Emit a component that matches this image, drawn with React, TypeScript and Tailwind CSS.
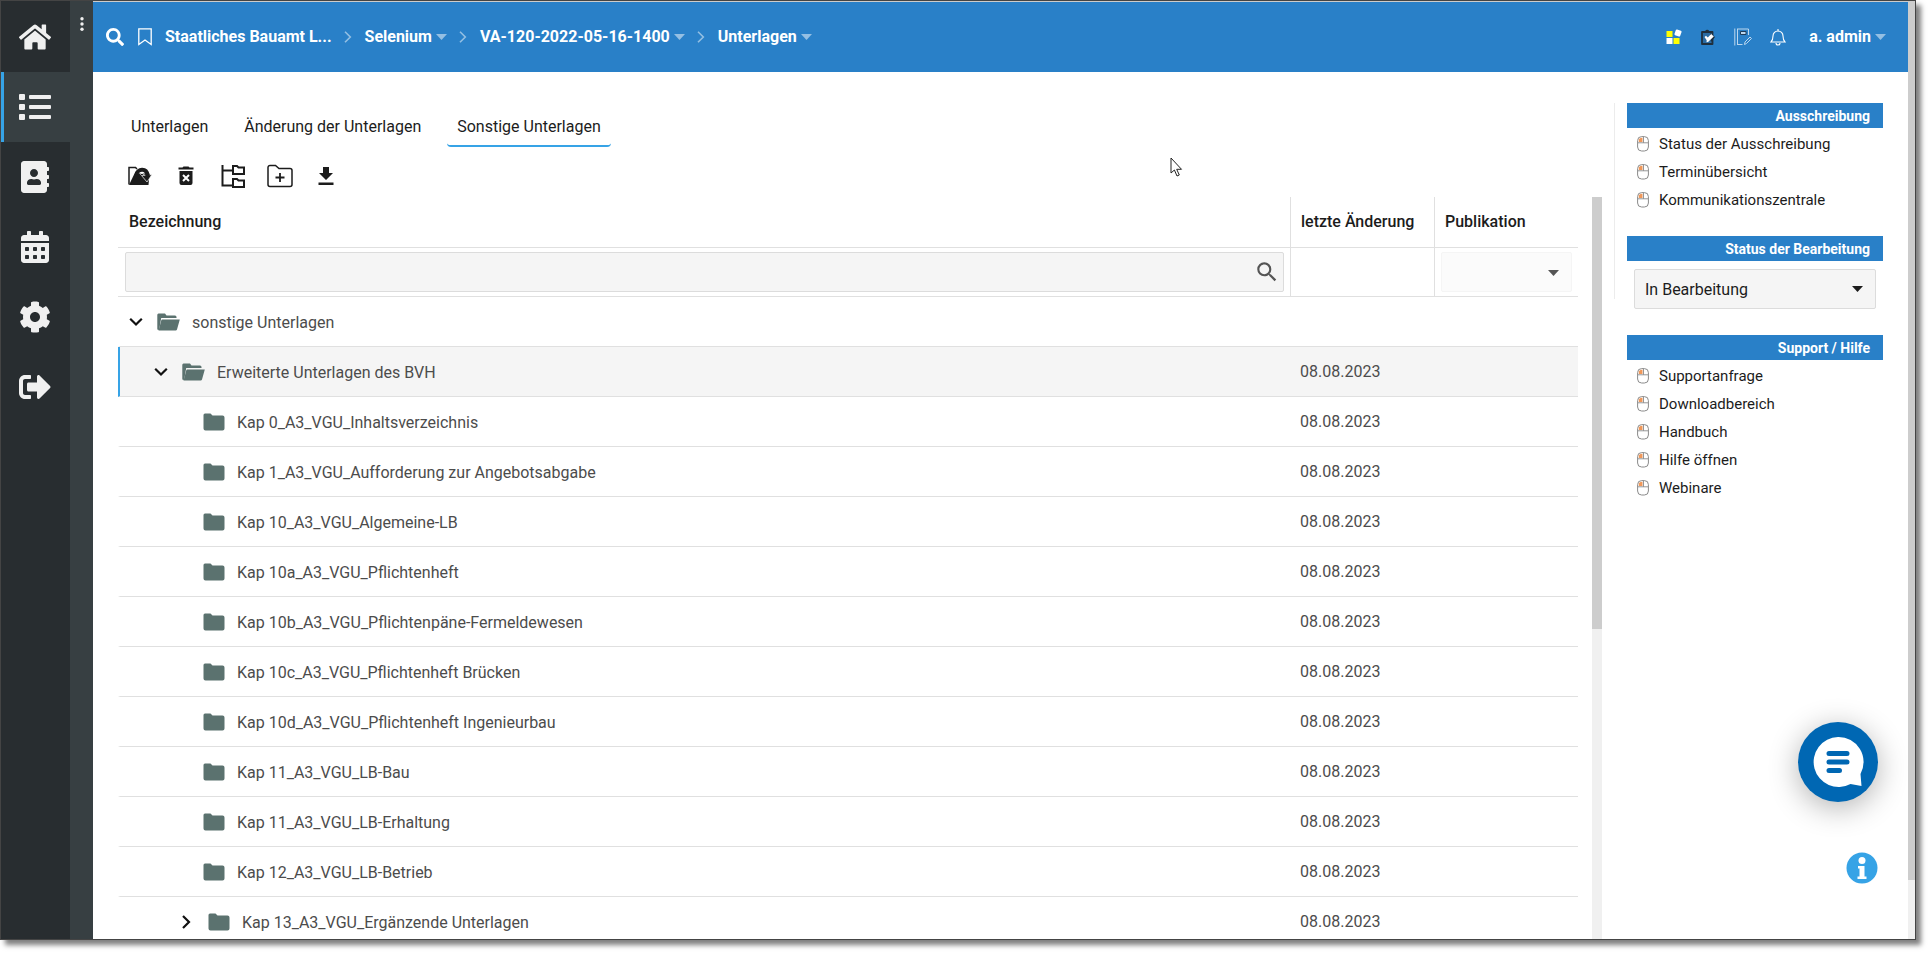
import { useState, type ReactNode } from 'react'
import { FaHome, FaList, FaAddressBook, FaCalendarAlt, FaCog, FaSignOutAlt, FaSearch } from 'react-icons/fa'
import { MdSearch } from 'react-icons/md'

interface TreeRow {
  name: string
  date?: string
  level: 'root' | 'branch' | 'leaf' | 'subBranch'
}

const DATE = '08.08.2023'

const ROWS: TreeRow[] = [
  { name: 'sonstige Unterlagen', level: 'root' },
  { name: 'Erweiterte Unterlagen des BVH', date: DATE, level: 'branch' },
  { name: 'Kap 0_A3_VGU_Inhaltsverzeichnis', date: DATE, level: 'leaf' },
  { name: 'Kap 1_A3_VGU_Aufforderung zur Angebotsabgabe', date: DATE, level: 'leaf' },
  { name: 'Kap 10_A3_VGU_Algemeine-LB', date: DATE, level: 'leaf' },
  { name: 'Kap 10a_A3_VGU_Pflichtenheft', date: DATE, level: 'leaf' },
  { name: 'Kap 10b_A3_VGU_Pflichtenpäne-Fermeldewesen', date: DATE, level: 'leaf' },
  { name: 'Kap 10c_A3_VGU_Pflichtenheft Brücken', date: DATE, level: 'leaf' },
  { name: 'Kap 10d_A3_VGU_Pflichtenheft Ingenieurbau', date: DATE, level: 'leaf' },
  { name: 'Kap 11_A3_VGU_LB-Bau', date: DATE, level: 'leaf' },
  { name: 'Kap 11_A3_VGU_LB-Erhaltung', date: DATE, level: 'leaf' },
  { name: 'Kap 12_A3_VGU_LB-Betrieb', date: DATE, level: 'leaf' },
  { name: 'Kap 13_A3_VGU_Ergänzende Unterlagen', date: DATE, level: 'subBranch' },
]

const INDENT = {
  root: 'pl-[6px]',
  branch: 'pl-[31px]',
  leaf: 'pl-[83px]',
  subBranch: 'pl-[56px]',
}

const NAV = [
  { label: 'Start', icon: <FaHome size={32} /> },
  { label: 'Liste', icon: <FaList size={32} /> },
  { label: 'Adressbuch', icon: <FaAddressBook size={32} /> },
  { label: 'Kalender', icon: <FaCalendarAlt size={32} /> },
  { label: 'Einstellungen', icon: <FaCog size={32} /> },
  { label: 'Abmelden', icon: <FaSignOutAlt size={32} /> },
]

const TABS = ['Unterlagen', 'Änderung der Unterlagen', 'Sonstige Unterlagen']

function Caret({ className }: { className?: string }) {
  return (
    <svg width="11" height="6" viewBox="0 0 11 6" className={className} aria-hidden="true">
      <path d="M0 0h11L5.500 6z" fill="currentColor" />
    </svg>
  )
}

function Chevron({ open }: { open: boolean }) {
  return (
    <svg width="20" height="20" viewBox="0 0 20 20" fill="none" stroke="#111" strokeWidth="2.2" aria-hidden="true">
      {open ? <path d="M4.2 6.7 10 12.5l5.800-5.800" /> : <path d="M7 4l6 6-6 6" />}
    </svg>
  )
}

function FolderClosed() {
  return (
    <svg width="22" height="18" viewBox="0 0 22 18" aria-hidden="true">
      <path d="M2 .5h5.500l2 2H19.500a2 2 0 0 1 2 2V15.500a2 2 0 0 1-2 2H2.500a2 2 0 0 1-2-2V2a1.500 1.500 0 0 1 1.500-1.500z" fill="#5b726f" />
    </svg>
  )
}

function FolderOpen() {
  return (
    <svg width="23" height="18" viewBox="0 0 23 18" aria-hidden="true">
      <path d="M1.500 .5H8l1.500 2H18a1.500 1.500 0 0 1 1.500 1.500v1H4.200L2.400 15.500 1.500 17.300A1.500 1.500 0 0 1 .3 16V2A1.500 1.500 0 0 1 1.500 .5z" fill="#5b726f" />
      <path d="M5.500 6.500H22.800L20 16.500a1.500 1.500 0 0 1-1.300 1H1.600L4.300 7.300a1 1 0 0 1 1.200-.8z" fill="#5b726f" />
    </svg>
  )
}

function MouseIcon() {
  return (
    <svg width="12" height="16" viewBox="0 0 12 16" fill="none" stroke="#8a8a8a" aria-hidden="true">
      <rect x=".6" y=".6" width="10.800" height="14.400" rx="4" />
      <path d="M1 6.800h10M6.500 1v5.800" strokeWidth=".9" />
      <path d="M1.800 3.500Q2.500 1.800 4.500 1.700H5.500V6H1.800z" fill="#f0985a" stroke="none" />
    </svg>
  )
}

function Crumb({ children, menu = true }: { children: ReactNode; menu?: boolean }) {
  return (
    <button type="button" className="flex items-center gap-1 font-bold">
      {children}
      {menu && <Caret className="text-[#94bfe3]" />}
    </button>
  )
}

function CrumbSeparator() {
  return (
    <svg width="8" height="12" viewBox="0 0 8 12" fill="none" stroke="#94bfe3" strokeWidth="1.600" className="ml-3 mr-[13px]" aria-hidden="true">
      <path d="M1 .8 6.300 6 1 11.200" />
    </svg>
  )
}

function TopBar() {
  return (
    <header className="flex h-[70px] shrink-0 items-center bg-[#2980c8] pl-[13px] pr-[22px] text-base text-white">
      <button type="button" aria-label="Suche" className="mr-[14px]">
        <FaSearch size={18} />
      </button>
      <button type="button" aria-label="Lesezeichen" className="mr-[13px]">
        <svg width="14" height="18" viewBox="0 0 14 18" fill="none" stroke="#fff" strokeWidth="1.300">
          <path d="M.8.8h12.400v15.700L7 12 .8 16.500z" />
        </svg>
      </button>
      <nav className="flex items-center" aria-label="Pfad">
        <Crumb menu={false}>Staatliches Bauamt L...</Crumb>
        <CrumbSeparator />
        <Crumb>Selenium</Crumb>
        <CrumbSeparator />
        <Crumb>VA-120-2022-05-16-1400</Crumb>
        <CrumbSeparator />
        <Crumb>Unterlagen</Crumb>
      </nav>
      <div className="ml-auto flex items-center gap-[18px]">
        <button type="button" aria-label="Anwendungen">
          <svg width="16" height="16" viewBox="0 0 16 16">
            <path d="M.5 2h6v6h-6zM7.500 9h6v6h-6z" fill="#ff0" />
            <path d="M.5 9h6v6h-6z" fill="#fff" />
            <rect x="9" y="1" width="6" height="6" rx="1" fill="#fff" transform="rotate(20 12 4)" />
          </svg>
        </button>
        <button type="button" aria-label="Aufgaben">
          <svg width="16" height="16" viewBox="0 0 16 16">
            <path d="M2 3h10.500v12H2z" fill="#2a6ba3" stroke="#1f2f3d" strokeWidth="1.800" strokeLinejoin="round" />
            <path d="M3.500 3.500V2H5.200a2.200 2.200 0 0 1 4 0H11v1.500z" fill="#1f2f3d" />
            <path d="M10 4l5 4-4 5z" fill="#1f2f3d" />
            <path d="M4.500 8 6 6.800l1.800 1.800L11.200 5l2.600 2.600L8 13l-1.500.3.200-2z" fill="#fff" />
          </svg>
        </button>
        <button type="button" aria-label="Notizen">
          <svg width="18" height="18" viewBox="0 0 18 18" fill="none" stroke="#bcd7ee">
            <path d="M.8.5v17M3.500 17V1M3 1h11.500v6M3 16.500h5.500" />
            <path d="M6.500 3.500h5.500v3h-5.500z" stroke="#1d3c5a" fill="#bcd7ee" />
            <path d="m10.500 16.500.5-2.500 5-5 1.500 1.500-5 5z" />
          </svg>
        </button>
        <button type="button" aria-label="Benachrichtigungen">
          <svg width="16" height="18" viewBox="0 0 16 18" fill="none" stroke="#fff" strokeWidth="1.100">
            <path d="M8 1v1.500M1 14h14c-1.500-1.500-2-2.500-2-6a5 5 0 0 0-10 0c0 3.500-.5 4.500-2 6zM6 15a2 2 0 0 0 4 0" />
          </svg>
        </button>
        <div className="ml-[5px]">
          <Crumb>a. admin</Crumb>
        </div>
      </div>
    </header>
  )
}

function Toolbar() {
  return (
    <div className="mt-4 flex h-[26px] items-center pl-[35px] text-[#1c1c1c]">
      <button type="button" aria-label="Ordner wechseln" className="mr-[26px]">
        <svg width="24" height="20" viewBox="0 0 24 20">
          <path d="M1 18.500V1.500h6.500L9 3" fill="none" stroke="currentColor" strokeWidth="1.500" />
          <path d="M1 19 6.500 7.500H21.500L20.500 19z" fill="currentColor" />
          <path d="M8.500 8.500C9.500 2.500 18.500 1.500 19.500 9" fill="none" stroke="currentColor" strokeWidth="4" />
          <path d="M12 8.500c2.500-2.500 4.500-.5 4.500 3" fill="none" stroke="#fff" strokeWidth="1" />
          <path d="M13.500 9.500 19 16l5-7.500-3 .5z" fill="currentColor" stroke="#fff" strokeWidth=".7" />
          <path d="M17.400 8h4.200v2.500h-4.200z" fill="currentColor" />
        </svg>
      </button>
      <button type="button" aria-label="Löschen" className="mr-[27px]">
        <svg width="16" height="20" viewBox="0 0 16 20">
          <path d="M.5 1.500h4l1-1h5l1 1h4v2H.5zM1.500 5h13v12a2 2 0 0 1-2 2h-9a2 2 0 0 1-2-2z" fill="currentColor" />
          <path d="m5 9 6 6M11 9l-6 6" stroke="#fff" strokeWidth="2" />
        </svg>
      </button>
      <button type="button" aria-label="Struktur" className="mr-[22px]">
        <svg width="24" height="24" viewBox="0 0 24 24" fill="none" stroke="currentColor" strokeWidth="2">
          <path d="M1.500 1v20.500H12M1.500 6.500H12" />
          <path d="M12 2h4l1.500 1.500H23V10H12zM12 15h4l1.500 1.500H23V23H12z" />
        </svg>
      </button>
      <button type="button" aria-label="Neuer Ordner" className="mr-[23px]">
        <svg width="26" height="24" viewBox="0 0 26 24" fill="none" stroke="currentColor" strokeWidth="1.500">
          <path d="M3 1.500h5.500L12 4.500h11a2 2 0 0 1 2 2V20.500a2 2 0 0 1-2 2H3a2 2 0 0 1-2-2v-17a2 2 0 0 1 2-2z" />
          <path d="M13 9v9M8.500 13.500h9" strokeWidth="1.800" />
        </svg>
      </button>
      <button type="button" aria-label="Herunterladen">
        <svg width="20" height="20" viewBox="0 0 20 20" fill="currentColor">
          <path d="M7 1h6v6h4l-7 7-7-7h4zM2.500 16.500h15V19h-15z" />
        </svg>
      </button>
    </div>
  )
}

function DocumentTable() {
  return (
    <table className="w-full table-fixed border-separate border-spacing-0 text-base text-[#4c4c4c]">
      <colgroup>
        <col />
        <col className="w-[144px]" />
        <col className="w-[143px]" />
      </colgroup>
      <thead className="text-left text-[#1c1c1c]">
        <tr className="h-[51px]">
          <th className="border-b border-r border-[#e0e0e0] pl-[11px] font-medium">Bezeichnung</th>
          <th className="border-b border-r border-[#e0e0e0] pl-[10px] font-medium">letzte Änderung</th>
          <th className="border-b border-[#e0e0e0] pl-[10px] font-medium">Publikation</th>
        </tr>
        <tr className="h-[49px]">
          <td className="border-b border-r border-[#e0e0e0] pl-[7px] pr-[6px]">
            <div className="relative">
              <input
                type="text"
                aria-label="Bezeichnung filtern"
                className="block h-10 w-full rounded-xs border border-[#dcdcdc] bg-[#f5f5f5] pl-3 pr-10 outline-none"
              />
              <MdSearch size={26} className="pointer-events-none absolute right-1 top-[7px] text-[#555]" />
            </div>
          </td>
          <td className="border-b border-r border-[#e0e0e0]" />
          <td className="border-b border-[#e0e0e0] px-[6px]">
            <div className="relative">
              <select
                aria-label="Publikation filtern"
                className="block h-10 w-full appearance-none rounded-xs border border-[#f5f5f5] bg-[#fbfbfb] pl-3"
              />
              <Caret className="pointer-events-none absolute right-[13px] top-[18px] text-[#555]" />
            </div>
          </td>
        </tr>
      </thead>
      <tbody>
        {ROWS.map(({ name, date, level }) => {
          const selected = level === 'branch'
          const open = level === 'root' || selected
          return (
            <tr key={name} className={selected ? 'h-[50px] bg-[#f5f5f5]' : 'h-[50px]'}>
              <td className={`border-b border-l-2 border-b-[#e0e0e0] ${selected ? 'border-l-[#36a3e6]' : 'border-l-transparent'}`}>
                <div className={`flex items-center ${INDENT[level]}`}>
                  {level !== 'leaf' && (
                    <button type="button" aria-label={open ? 'Zuklappen' : 'Aufklappen'} className={open ? 'mr-[11px]' : 'mr-3'}>
                      <Chevron open={open} />
                    </button>
                  )}
                  {open ? <FolderOpen /> : <FolderClosed />}
                  <span className="pl-3 pt-0.5">{name}</span>
                </div>
              </td>
              <td className="border-b border-[#e0e0e0] pl-[9px]">{date}</td>
              <td className="border-b border-[#e0e0e0]" />
            </tr>
          )
        })}
      </tbody>
    </table>
  )
}

function PanelTitle({ children }: { children: ReactNode }) {
  return (
    <h2 className="h-[25px] bg-[#2980c8] pr-[13px] pt-px text-right text-sm leading-6 font-bold text-white">{children}</h2>
  )
}

function LinkPanel({ title, links }: { title: string; links: string[] }) {
  return (
    <section>
      <PanelTitle>{title}</PanelTitle>
      <ul className="pt-[2px] text-[15px] leading-7 text-[#1c1c1c]">
        {links.map((link) => (
          <li key={link}>
            <a href="#" className="flex items-center gap-[10px] pl-[10px]">
              <MouseIcon />
              {link}
            </a>
          </li>
        ))}
      </ul>
    </section>
  )
}

export default function App() {
  const [tab, setTab] = useState(2)

  return (
    <div className="h-screen overflow-hidden bg-white pb-[15px] pr-[15px] font-[Roboto,sans-serif]">
      <div className="relative flex h-full border border-[#444] shadow-[5px_5px_5px_rgba(0,0,0,0.5)]">
        <aside className="flex shrink-0 bg-[#282d30] text-[#f0f0f0]">
          <nav className="w-[69px] pt-px" aria-label="Hauptmenü">
            {NAV.map(({ label, icon }, i) => (
              <button
                key={label}
                type="button"
                aria-label={label}
                className={`flex h-[70px] w-full items-center justify-center border-l-[3px] pr-[5px] ${i === 1 ? 'border-[#36a3e6] bg-[#373f42]' : 'border-transparent'}`}
              >
                {icon}
              </button>
            ))}
          </nav>
          <div className="w-[23px] bg-[#373f42] pt-4">
            <button type="button" aria-label="Menü" className="mx-auto block">
              <svg width="4" height="14" viewBox="0 0 4 14" fill="currentColor">
                <circle cx="2" cy="1.700" r="1.700" />
                <circle cx="2" cy="7" r="1.700" />
                <circle cx="2" cy="12.300" r="1.700" />
              </svg>
            </button>
          </div>
        </aside>

        <div className="flex min-w-0 flex-1 flex-col border-t border-[#ccc]">
          <TopBar />
          <div className="flex min-h-0 flex-1">
            <main className="flex min-w-0 flex-1 flex-col">
              <div className="mt-9 flex gap-4 pl-7" role="tablist">
                {TABS.map((label, i) => (
                  <button
                    key={label}
                    type="button"
                    role="tab"
                    aria-selected={i === tab}
                    onClick={() => setTab(i)}
                    className={`h-[39px] rounded-sm border-b-2 px-[10px] pt-px text-base text-[#1c1c1c] ${i === tab ? 'border-[#36a3e6]' : 'border-transparent'}`}
                  >
                    {label}
                  </button>
                ))}
              </div>
              <Toolbar />
              <div className="mt-2 flex min-h-0 flex-1 pl-[25px]">
                <div className="min-w-0 flex-1 overflow-hidden">
                  <DocumentTable />
                </div>
                <div className="ml-[14px] w-[10px] bg-[#f0f0f0]">
                  <div className="h-[432px] max-h-full bg-[#cdcdcd]" />
                </div>
              </div>
            </main>

            <aside className="ml-3 mt-[31px] w-[294px] shrink-0 pr-[25px]">
              <div className="h-[196px] border-l border-[#ececec] pl-3">
                <LinkPanel
                  title="Ausschreibung"
                  links={['Status der Ausschreibung', 'Terminübersicht', 'Kommunikationszentrale']}
                />
                <section className="mt-[22px]">
                  <PanelTitle>Status der Bearbeitung</PanelTitle>
                  <div className="relative mx-[7px] mt-2">
                    <select
                      aria-label="Status der Bearbeitung"
                      className="block h-10 w-full appearance-none rounded-xs border border-[#dcdcdc] bg-[#f5f5f5] px-[10px] pt-0.5 text-base text-[#1c1c1c]"
                    >
                      <option>In Bearbeitung</option>
                    </select>
                    <Caret className="pointer-events-none absolute right-[13px] top-[17px] text-[#1c1c1c]" />
                  </div>
                </section>
                <div className="mt-[26px]">
                  <LinkPanel
                    title="Support / Hilfe"
                    links={['Supportanfrage', 'Downloadbereich', 'Handbuch', 'Hilfe öffnen', 'Webinare']}
                  />
                </div>
              </div>
            </aside>
          </div>
        </div>

        <div className="w-[7px] shrink-0 bg-[#f0f0f0]">
          <div className="h-[879px] max-h-[94%] bg-[#cdcdcd]" />
        </div>

        <button
          type="button"
          aria-label="Chat"
          className="absolute bottom-[137px] right-[37px] size-20 rounded-full bg-[#0067b3] shadow-[0_6px_30px_rgba(0,0,0,0.3)]"
        >
          <svg width="80" height="80" viewBox="0 0 80 80">
            <path d="M40 15a25 25 0 1 0 12.500 47L63.500 64 62.500 52A25 25 0 0 0 40 15z" fill="#fff" />
            <path d="M31 31.500h18M31 40h18M31 48.500h10.500" stroke="#0067b3" strokeWidth="5" strokeLinecap="round" />
          </svg>
        </button>
        <button type="button" aria-label="Information" className="absolute bottom-[55px] right-[37px]">
          <svg width="32" height="32" viewBox="0 0 32 32">
            <circle cx="16" cy="16" r="15.500" fill="#36a3e6" />
            <circle cx="16" cy="8.500" r="3.500" fill="#fff" />
            <path d="M12 14h6.500v10.500h2V27h-9v-2.500h2v-8H12z" fill="#fff" />
          </svg>
        </button>
        <svg width="13" height="20" viewBox="0 0 13 20" className="absolute left-[1169px] top-[156px]" aria-hidden="true">
          <path d="M1 1v15l3.400-3 2.600 6 2.300-1-2.600-5.700H11.500z" fill="#fff" stroke="#222" />
        </svg>
      </div>
    </div>
  )
}
